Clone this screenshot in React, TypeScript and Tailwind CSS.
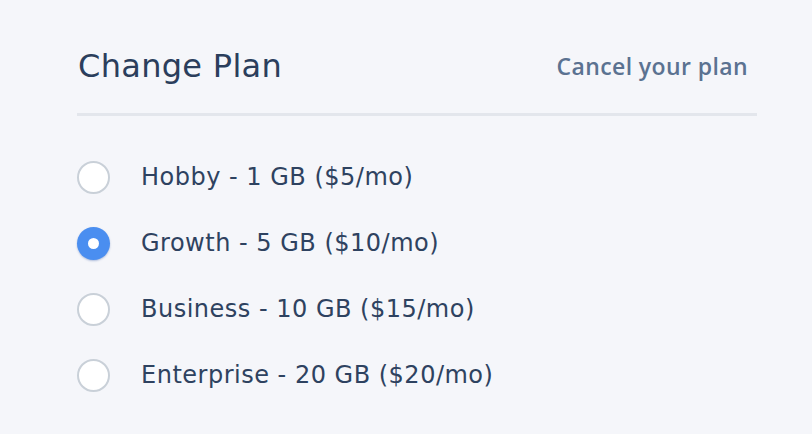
import React from "react";

const plans = [
  { label: "Hobby - 1 GB ($5/mo)", selected: false },
  { label: "Growth - 5 GB ($10/mo)", selected: true },
  { label: "Business - 10 GB ($15/mo)", selected: false },
  { label: "Enterprise - 20 GB ($20/mo)", selected: false },
];

export default function App() {
  return (
    <div
      className="w-[812px] h-[434px] bg-[#f5f6fa] overflow-hidden"
      style={{ fontFamily: '"DejaVu Sans", "Open Sans", sans-serif' }}
    >
      <div className="ml-[77px] w-[680px] pt-[44px]">
        <div className="flex items-center justify-between h-[44px]">
          <h1 className="text-[32px] leading-none text-[#2b3e5c] pl-[1px] tracking-[0.3px]">Change Plan</h1>
          <a
            className="text-[23px] leading-none font-semibold text-[#5b7291] pr-[9px] tracking-[0.4px]"
            style={{ fontFamily: '"Open Sans", sans-serif' }}
          >
            Cancel your plan
          </a>
        </div>
        <div className="mt-[25px] h-[3px] bg-[#e3e6ec]" />
        <div className="mt-[28px] flex flex-col">
          {plans.map((p) => (
            <div key={p.label} className="flex items-center h-[66px]">
              {p.selected ? (
                <div className="w-[33px] h-[33px] rounded-full bg-[#4a8ef0] flex items-center justify-center shadow-[0_1px_2px_rgba(40,80,160,0.35)]">
                  <div className="w-[11px] h-[11px] rounded-full bg-white" />
                </div>
              ) : (
                <div className="w-[33px] h-[33px] rounded-full bg-white border-2 border-[#c9d0d8]" />
              )}
              <span className="ml-[31px] text-[24px] leading-none text-[#2e4260] tracking-[0.5px]">{p.label}</span>
            </div>
          ))}
        </div>
      </div>
    </div>
  );
}
